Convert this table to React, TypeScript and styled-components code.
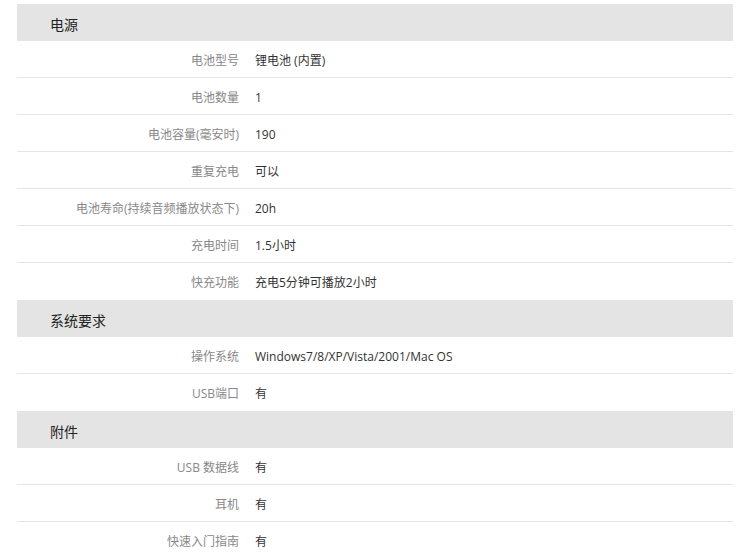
import styled, { createGlobalStyle } from "styled-components"

type Spec = { label: string; value: string }
type Section = { title: string; specs: Spec[] }

const sections: Section[] = [
  {
    title: "电源",
    specs: [
      { label: "电池型号", value: "锂电池 (内置)" },
      { label: "电池数量", value: "1" },
      { label: "电池容量(毫安时)", value: "190" },
      { label: "重复充电", value: "可以" },
      { label: "电池寿命(持续音频播放状态下)", value: "20h" },
      { label: "充电时间", value: "1.5小时" },
      { label: "快充功能", value: "充电5分钟可播放2小时" },
    ],
  },
  {
    title: "系统要求",
    specs: [
      { label: "操作系统", value: "Windows7/8/XP/Vista/2001/Mac OS" },
      { label: "USB端口", value: "有" },
    ],
  },
  {
    title: "附件",
    specs: [
      { label: "USB 数据线", value: "有" },
      { label: "耳机", value: "有" },
      { label: "快速入门指南", value: "有" },
    ],
  },
]

const SpecTable = () => {
  return (
    <Container>
      {sections.map((section) => (
        <Group key={section.title}>
          <GroupHeader>{section.title}</GroupHeader>
          {section.specs.map((spec, i) => (
            <SpecRow key={spec.label} $last={i === section.specs.length - 1}>
              <Label>{spec.label}</Label>
              <Value>{spec.value}</Value>
            </SpecRow>
          ))}
        </Group>
      ))}
    </Container>
  )
}

export default function App() {
  return (
    <>
      <GlobalStyle />
      <SpecTable />
    </>
  )
}

const GlobalStyle = createGlobalStyle`
  body {
    margin: 0;
    background: #fff;
    font-family: "Open Sans", "Noto Sans CJK SC", sans-serif;
  }
`

const Container = styled.div`
  width: 716px;
  padding: 4px 17px 0;
`

const Group = styled.section`
  display: flex;
  flex-direction: column;
`

const GroupHeader = styled.div`
  height: 37px;
  display: flex;
  align-items: center;
  padding: 2px 0 0 33px;
  box-sizing: border-box;
  background: #e5e4e4;
  color: #222;
  font-size: 14px;
`

const SpecRow = styled.div<{ $last: boolean }>`
  height: 36px;
  display: grid;
  grid-template-columns: 222px 1fr;
  align-items: center;
  padding-top: 2px;
  box-sizing: border-box;
  height: 37px;
  border-bottom: 1px solid ${({ $last }) => ($last ? "transparent" : "#e5e5e5")};
  font-size: 12px;
`

const Label = styled.div`
  text-align: right;
  color: #888;
`

const Value = styled.div`
  padding-left: 16px;
  color: #333;
`
